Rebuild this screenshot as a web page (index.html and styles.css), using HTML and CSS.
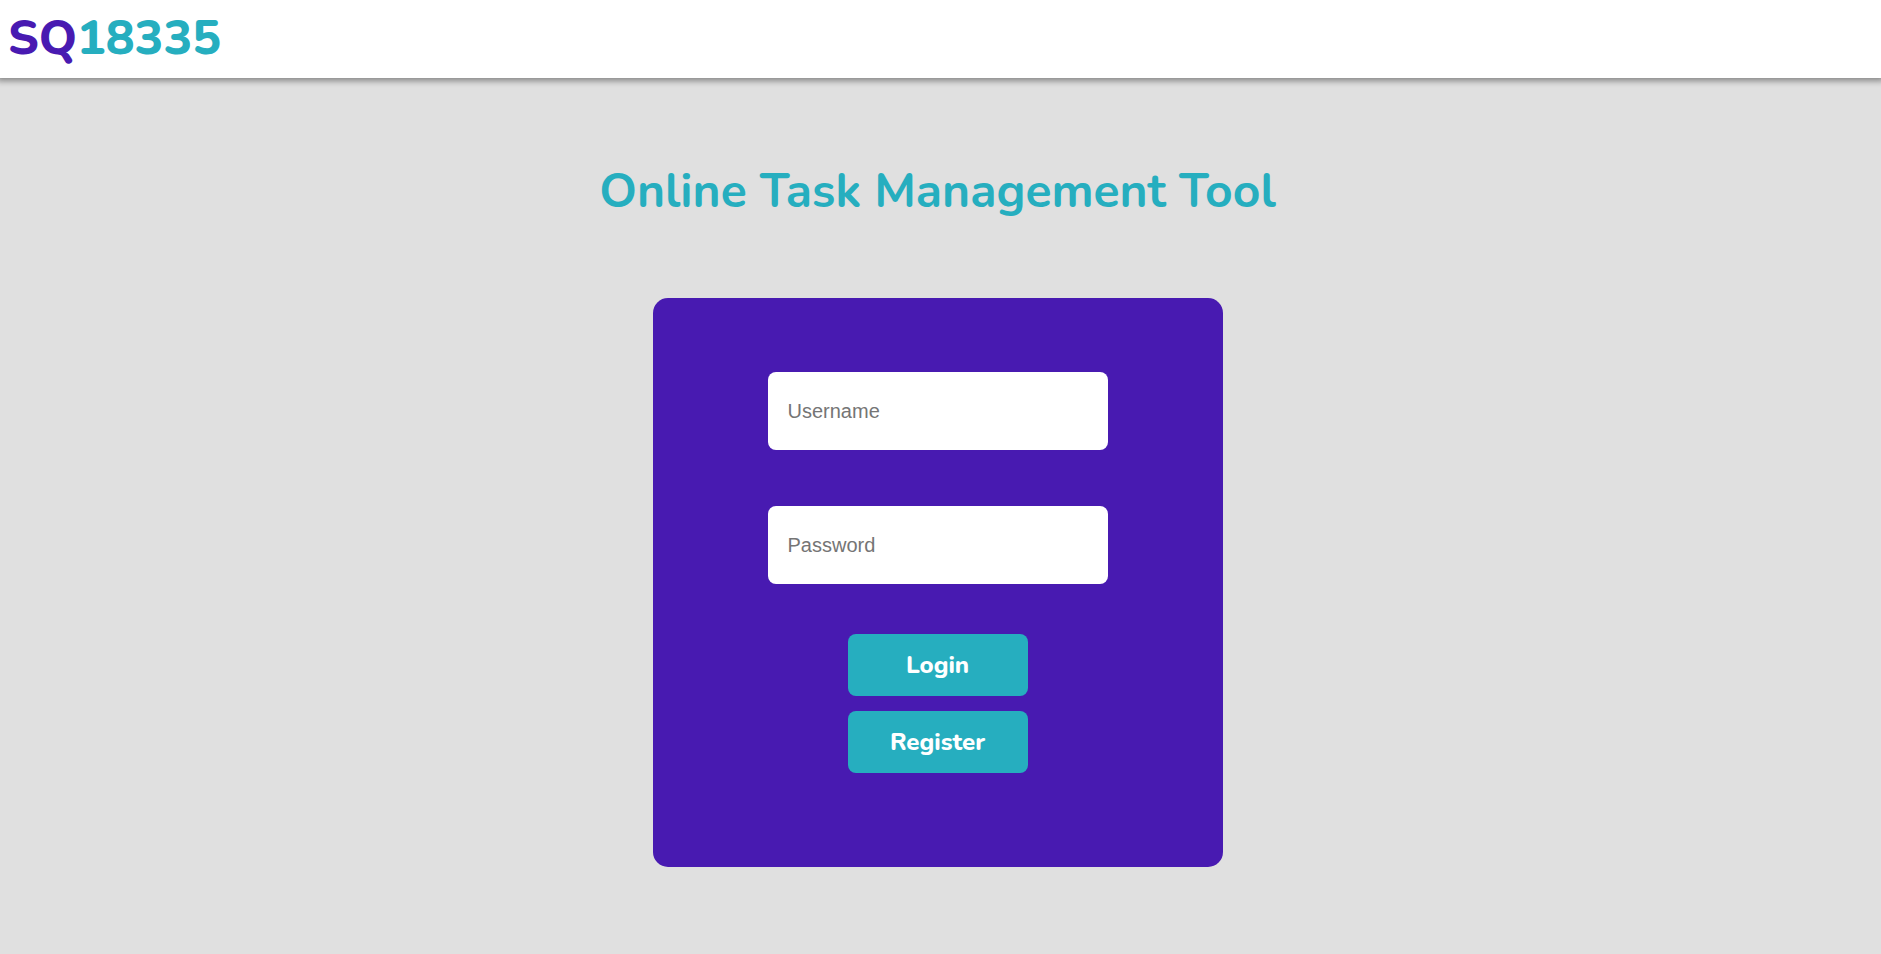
FILE: index.html
```html
<!DOCTYPE html>
<html lang="en">
<head>
<meta charset="utf-8">
<meta name="viewport" content="width=device-width, initial-scale=1">
<title>SQ18335 - Online Task Management Tool</title>
<link rel="stylesheet" href="styles.css">
</head>
<body>
<header class="site-header">
  <a class="logo" href="#">SQ<span class="logo-number">18335</span></a>
</header>
<main class="page">
  <h1 class="title">Online Task Management Tool</h1>
  <form class="login-card">
    <input class="field" type="text" name="username" placeholder="Username" aria-label="Username">
    <input class="field" type="password" name="password" placeholder="Password" aria-label="Password">
    <div class="actions">
      <button class="button" type="submit">Login</button>
      <button class="button" type="button">Register</button>
    </div>
  </form>
</main>
</body>
</html>
```

FILE: styles.css
```css
* {
  box-sizing: border-box;
}

body {
  margin: 0;
  min-height: 100vh;
  background: #e0e0e0;
  font-family: Nunito, "Open Sans", sans-serif;
}

.site-header {
  padding: 6px 8px 8px;
  background: #fff;
  box-shadow: 0 0 6px 3px rgba(0, 0, 0, 0.4);
}

.logo {
  display: block;
  color: #481ab1;
  font-size: 48px;
  font-weight: 800;
  line-height: 64px;
  text-decoration: none;
}

.logo-number {
  color: #26aebf;
}

.page {
  display: flex;
  flex-direction: column;
  align-items: center;
  padding: 81px 6px 80px 0;
}

.title {
  margin: 0 0 75px;
  color: #26aebf;
  font-size: 48px;
  font-weight: 700;
  line-height: 64px;
  text-align: center;
}

.login-card {
  display: flex;
  flex-direction: column;
  align-items: center;
  gap: 56px;
  width: 100%;
  max-width: 570px;
  padding: 74px 20px 94px;
  border-radius: 15px;
  background: #481ab1;
}

.field {
  width: 100%;
  max-width: 340px;
  padding: 27px 20px;
  border: 0;
  border-radius: 8px;
  background: #fff;
  font-family: "Liberation Sans", Arial, sans-serif;
  font-size: 20px;
  line-height: 24px;
}

.field::placeholder {
  color: #757575;
}

.actions {
  display: flex;
  flex-direction: column;
  gap: 15px;
  width: 180px;
  margin-top: -6px;
}

.button {
  padding: 15px;
  border: 0;
  border-radius: 8px;
  background: #26aebf;
  color: #fff;
  font-family: inherit;
  font-size: 24px;
  font-weight: 800;
  line-height: 32px;
  cursor: pointer;
}
```
